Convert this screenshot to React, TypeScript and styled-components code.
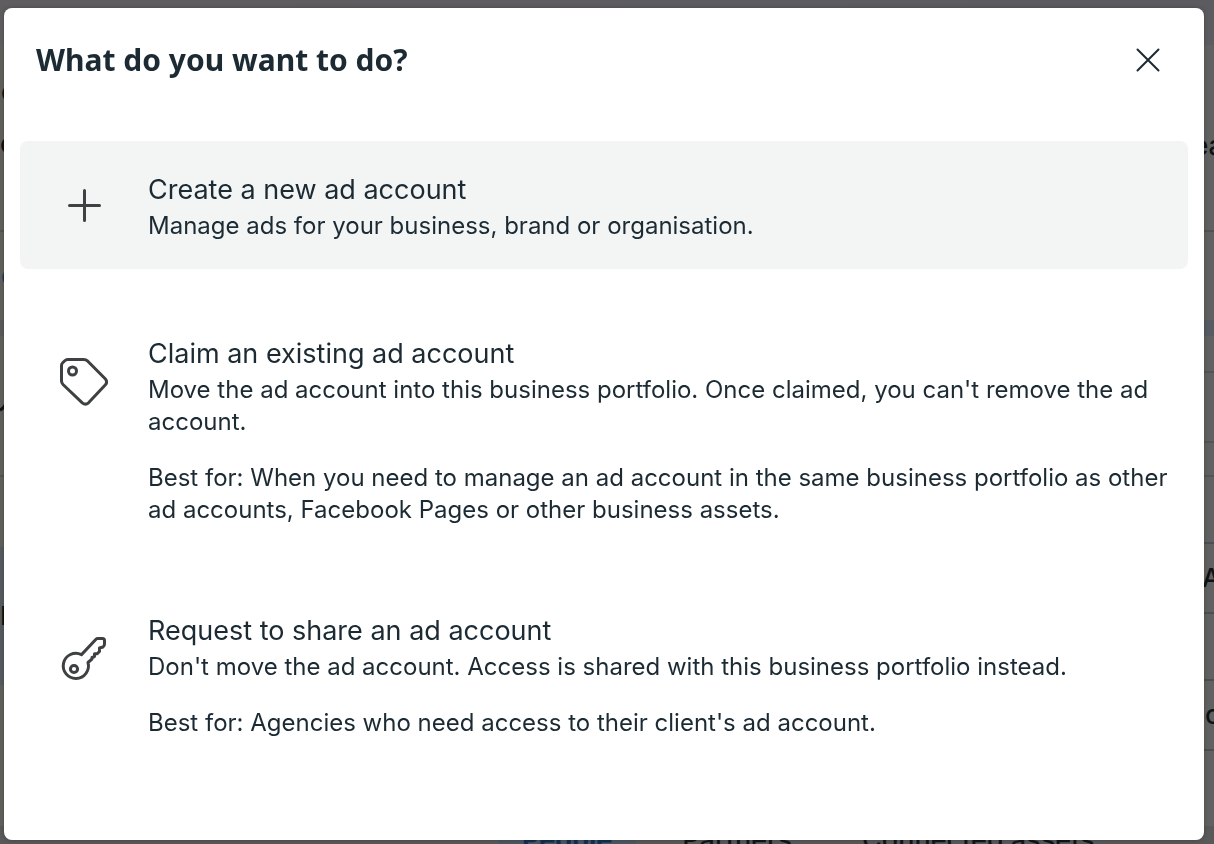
import React from "react";
import styled, { createGlobalStyle } from "styled-components";

const GlobalStyle = createGlobalStyle`
  *, *::before, *::after { box-sizing: border-box; }
  html, body { margin: 0; }
  body { font-family: Inter, "Liberation Sans", sans-serif; color: #1c2b33; }
  h1, h2, p { margin: 0; }
`;

const Page = styled.div`
  height: 100vh;
  overflow: hidden;
  display: flex;
  flex-direction: column;
  background: #606060;
`;

const TopBar = styled.div`
  flex: none;
  height: 45px;
  background: linear-gradient(90deg, #605d60, #5b5b60);
`;

const Columns = styled.div`
  flex: none;
  display: flex;
  justify-content: space-between;
`;

const Column = styled.div<{ $right?: boolean }>`
  width: 24px;
  background: ${(p) => (p.$right ? "#616161" : "#61605c")};
`;

const Strip = styled.div<{ $h: number; $tone?: string; $line?: string; $ink?: string; $pad?: number }>`
  height: ${(p) => p.$h}px;
  display: flex;
  align-items: center;
  padding-left: ${(p) => p.$pad ?? 0}px;
  background: ${(p) => p.$tone ?? "transparent"};
  border-bottom: ${(p) => (p.$line ? `2px solid ${p.$line}` : "0")};
  color: ${(p) => p.$ink ?? "#0d1215"};
  font-size: 26px;
  font-weight: 500;
  line-height: 30px;
  white-space: nowrap;
  overflow: hidden;
`;

const TabRow = styled.div`
  flex: none;
  display: flex;
  padding-left: 450px;
  background: #59595a;
  font-size: 27px;
  line-height: 28px;
  color: #111619;
`;

const BackTab = styled.span<{ $active?: boolean }>`
  margin-left: ${(p) => (p.$active ? "48px" : "22px")};
  padding: 0 24px;
  background: ${(p) => (p.$active ? "#4d5660" : "transparent")};
  color: ${(p) => (p.$active ? "#122f52" : "inherit")};
  font-weight: ${(p) => (p.$active ? 700 : 500)};
`;

const Overlay = styled.div`
  position: fixed;
  inset: 0;
  display: flex;
  padding: 8px 10px 4px 4px;
`;

const Dialog = styled.section`
  flex: 1;
  min-width: 0;
  padding: 0 16px;
  border-radius: 8px;
  background: #fff;
  box-shadow: 0 0 4px rgba(0, 0, 0, 0.25);
  overflow: auto;
`;

const Header = styled.header`
  display: flex;
  align-items: center;
  justify-content: space-between;
  padding: 28px 16px 0;
  margin-bottom: 57px;
`;

const Title = styled.h1`
  font-family: "Noto Sans", "Open Sans", sans-serif;
  font-size: 30px;
  line-height: 48px;
  font-weight: 700;
`;

const CloseButton = styled.button`
  display: flex;
  align-items: center;
  justify-content: center;
  width: 48px;
  height: 48px;
  padding: 0;
  border: 0;
  background: none;
  color: #1c2b33;
  cursor: pointer;
`;

const Options = styled.div`
  display: flex;
  flex-direction: column;
  gap: 36px;
`;

const Option = styled.button<{ $active?: boolean }>`
  display: flex;
  align-items: flex-start;
  gap: 40px;
  width: 100%;
  padding: 29px 16px 20px 40px;
  border: 0;
  border-radius: 8px;
  background: ${(p) => (p.$active ? "#f3f5f5" : "transparent")};
  color: inherit;
  font-family: inherit;
  text-align: left;
  cursor: pointer;
`;

const IconBox = styled.span<{ $tall: boolean }>`
  flex: none;
  width: 48px;
  height: ${(p) => (p.$tall ? "96px" : "70px")};
  display: flex;
  align-items: center;
  justify-content: center;
  color: #3e4142;

  svg {
    flex: none;
  }
`;

const OptionText = styled.span`
  flex: 1;
  min-width: 0;
  min-height: 79px;
  display: block;
`;

const OptionTitle = styled.span`
  display: block;
  font-size: 27px;
  line-height: 40px;
`;

const OptionLine = styled.span`
  display: block;
  font-size: 24px;
  line-height: 32px;

  & + & {
    margin-top: 24px;
  }
`;

const PlusIcon = () => (
  <svg width="48" height="48" viewBox="0 0 48 48" fill="none" stroke="currentColor" strokeWidth="3" strokeLinecap="round" aria-hidden="true">
    <path d="M24.5 9.500v30M9.500 24.500h30" />
  </svg>
);

const TagIcon = () => (
  <svg width="48" height="48" viewBox="0 0 48 48" fill="none" stroke="currentColor" strokeWidth="3" strokeLinejoin="round" aria-hidden="true">
    <path d="M7.500 1.500H23.500Q26 1.500 27.800 3.200L45.200 20.800Q48 24 45.200 27L28.500 44.800Q25.500 47.500 22.300 44.800L3 26.500Q1.500 25 1.500 23V7.500Q1.500 6 2.700 4.800L4.800 2.700Q6 1.500 7.500 1.500Z" />
    <circle cx="12.500" cy="13" r="4" />
  </svg>
);

const KeyIcon = () => (
  <svg width="48" height="48" viewBox="0 0 48 48" fill="none" stroke="currentColor" strokeWidth="3" strokeLinejoin="round" strokeLinecap="round" aria-hidden="true">
    <path d="M21.500 19.600L36 4.200Q36.700 3.500 37.700 3.500H42.500Q44.500 3.500 44.500 5.500V9Q44.500 11 43 12L39.500 13V16.500L37 18.800H34.500V21.500L32 22.500V24L28 27.500A12.600 12.600 0 1 1 21.500 19.600Z" />
    <circle cx="14" cy="34" r="3.600" />
  </svg>
);

interface OptionData {
  title: string;
  lines: string[];
  icon: React.ReactNode;
  active?: boolean;
}

const options: OptionData[] = [
  {
    title: "Create a new ad account",
    lines: ["Manage ads for your business, brand or organisation."],
    icon: <PlusIcon />,
    active: true,
  },
  {
    title: "Claim an existing ad account",
    lines: [
      "Move the ad account into this business portfolio. Once claimed, you can't remove the ad account.",
      "Best for: When you need to manage an ad account in the same business portfolio as other ad accounts, Facebook Pages or other business assets.",
    ],
    icon: <TagIcon />,
  },
  {
    title: "Request to share an ad account",
    lines: [
      "Don't move the ad account. Access is shared with this business portfolio instead.",
      "Best for: Agencies who need access to their client's ad account.",
    ],
    icon: <KeyIcon />,
  },
];

export default function App() {
  return (
    <>
      <GlobalStyle />
      <Page aria-hidden="true">
        <TopBar />
        <Columns>
          <Column>
            <Strip $h={32} />
            <Strip $h={30} $pad={1}>o</Strip>
            <Strip $h={22} />
            <Strip $h={30}>c</Strip>
            <Strip $h={73} $line="#555452" />
            <Strip $h={88} $pad={1} $ink="#183a5c">o</Strip>
            <Strip $h={16} $tone="#5b5a5a" />
            <Strip $h={141} $line="#555452">
              <svg width="8" height="12" viewBox="0 0 8 12" fill="none" stroke="currentColor" strokeWidth="3">
                <path d="M0 10Q5 8 7 1" />
              </svg>
            </Strip>
            <Strip $h={70} />
            <Strip $h={138} $tone="#575b60">I</Strip>
            <Strip $h={141} />
          </Column>
          <Column $right>
            <Strip $h={16} />
            <Strip $h={171} $line="#525252" $pad={3}>ea</Strip>
            <Strip $h={88} />
            <Strip $h={16} $tone="#575b62" />
            <Strip $h={37} $line="#545454" />
            <Strip $h={70} $line="#545454" />
            <Strip $h={34} $line="#545454" />
            <Strip $h={67} $line="#4b4f54" />
            <Strip $h={70} $line="#4b4f54" $pad={12}>A</Strip>
            <Strip $h={67} $line="#4b4f54" />
            <Strip $h={70} $line="#4b4f54" $pad={15}>c</Strip>
            <Strip $h={75} />
          </Column>
        </Columns>
        <TabRow>
          <BackTab $active>People</BackTab>
          <BackTab>Partners</BackTab>
          <BackTab>Connected assets</BackTab>
        </TabRow>
      </Page>
      <Overlay>
        <Dialog role="dialog" aria-modal="true" aria-labelledby="dialog-title">
          <Header>
            <Title id="dialog-title">What do you want to do?</Title>
            <CloseButton type="button" aria-label="Close">
              <svg width="24" height="24" viewBox="0 0 24 24" fill="none" stroke="currentColor" strokeWidth="2" strokeLinecap="round" aria-hidden="true">
                <path d="M1.500 1.500L22.500 22.500M22.500 1.500L1.500 22.500" />
              </svg>
            </CloseButton>
          </Header>
          <Options>
            {options.map((option) => (
              <Option key={option.title} type="button" $active={option.active}>
                <IconBox $tall={option.lines.length > 1}>{option.icon}</IconBox>
                <OptionText>
                  <OptionTitle>{option.title}</OptionTitle>
                  {option.lines.map((line) => (
                    <OptionLine key={line}>{line}</OptionLine>
                  ))}
                </OptionText>
              </Option>
            ))}
          </Options>
        </Dialog>
      </Overlay>
    </>
  );
}
